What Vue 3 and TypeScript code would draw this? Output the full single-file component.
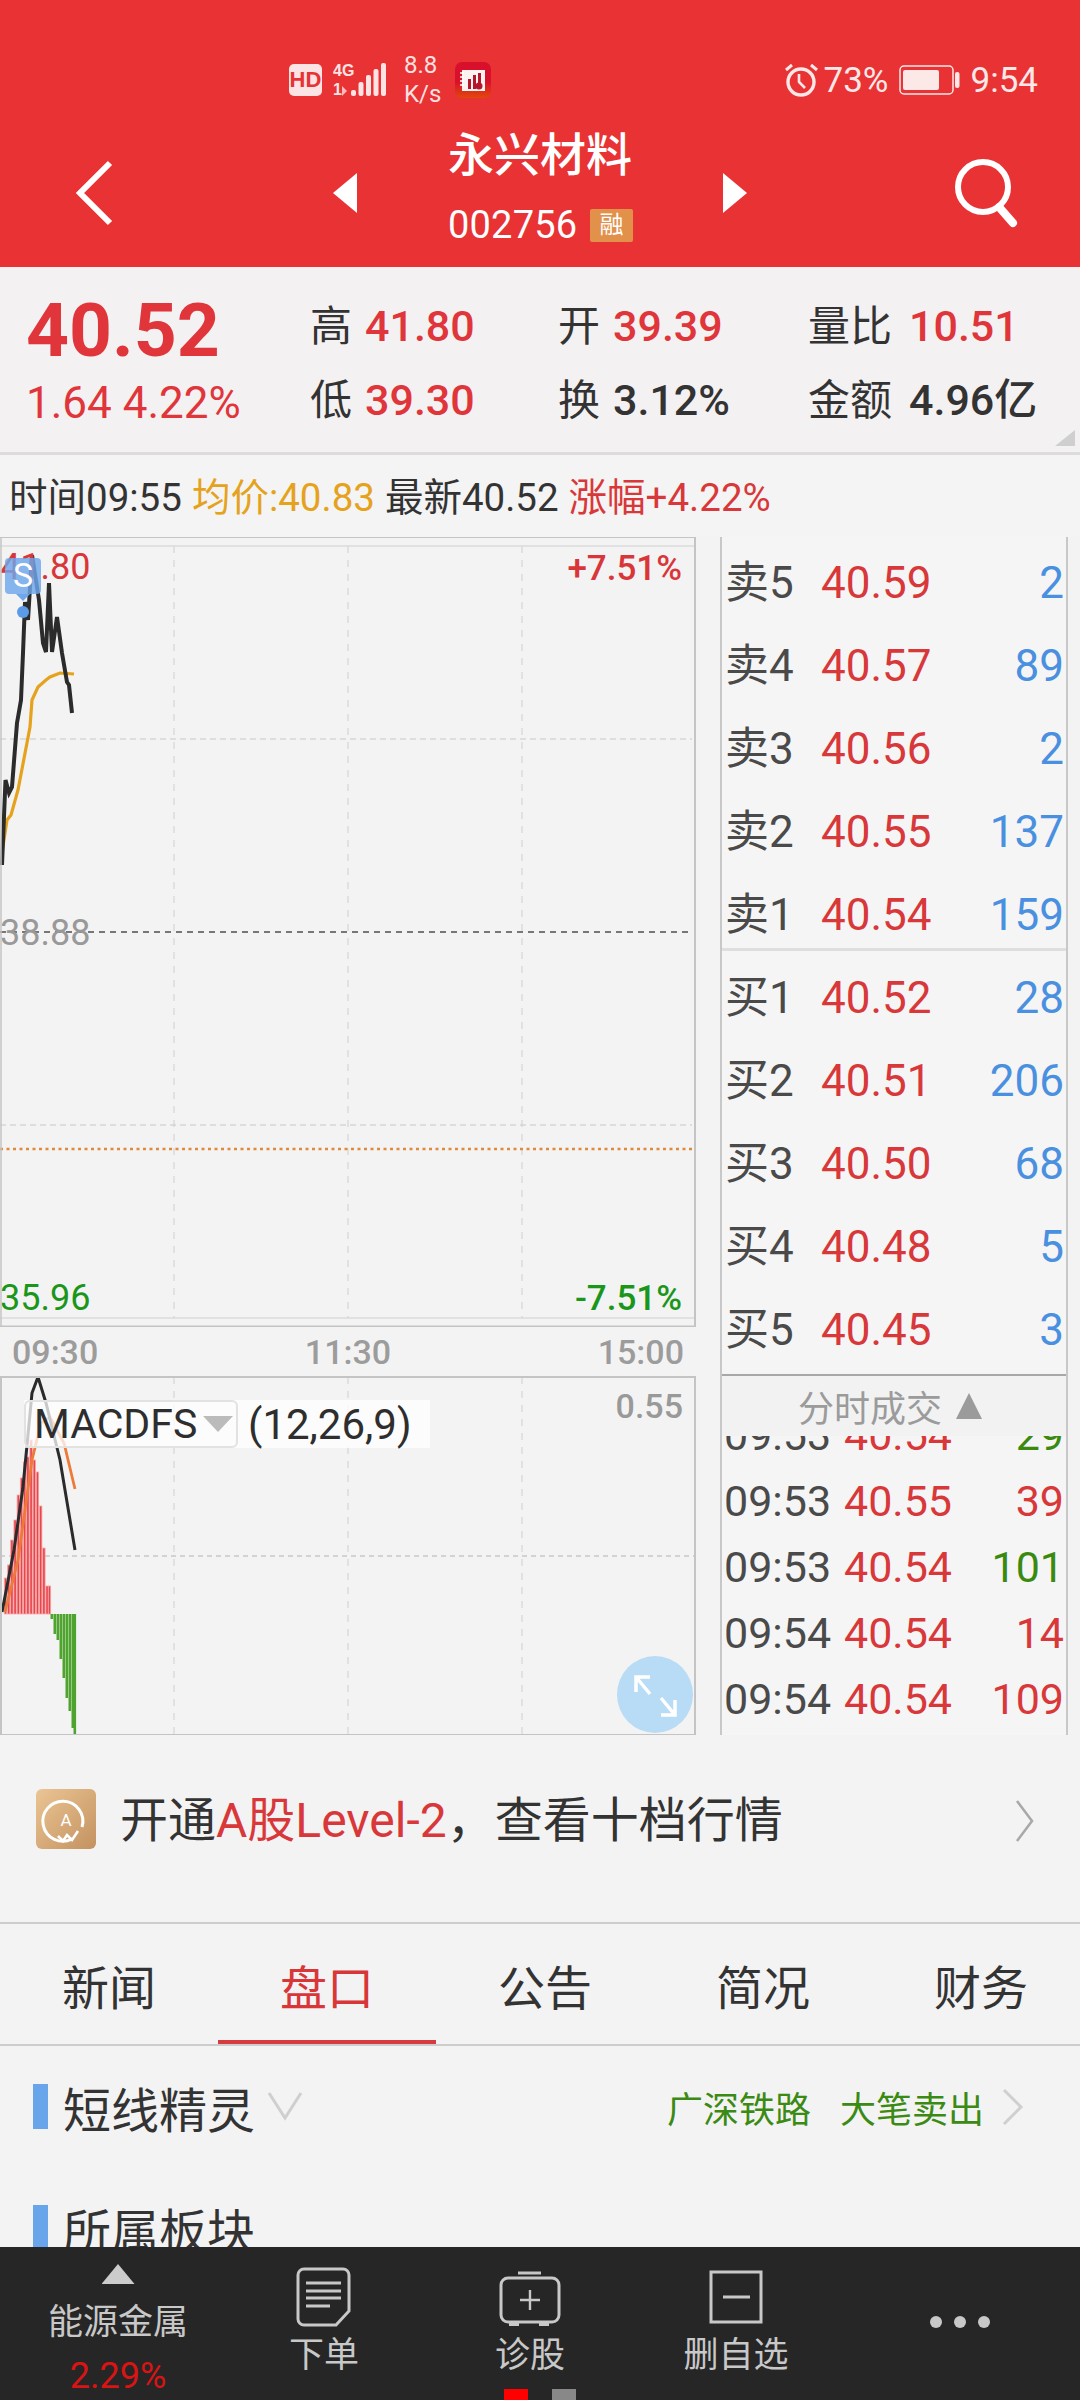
<script setup lang="ts">
const sellRows = [
  { label: "卖5", price: "40.59", vol: "2" },
  { label: "卖4", price: "40.57", vol: "89" },
  { label: "卖3", price: "40.56", vol: "2" },
  { label: "卖2", price: "40.55", vol: "137" },
  { label: "卖1", price: "40.54", vol: "159" },
];
const buyRows = [
  { label: "买1", price: "40.52", vol: "28" },
  { label: "买2", price: "40.51", vol: "206" },
  { label: "买3", price: "40.50", vol: "68" },
  { label: "买4", price: "40.48", vol: "5" },
  { label: "买5", price: "40.45", vol: "3" },
];
const trades = [
  { time: "09:53", price: "40.54", vol: "29", up: false },
  { time: "09:53", price: "40.55", vol: "39", up: true },
  { time: "09:53", price: "40.54", vol: "101", up: false },
  { time: "09:54", price: "40.54", vol: "14", up: true },
  { time: "09:54", price: "40.54", vol: "109", up: true },
];
const tabs = ["新闻", "盘口", "公告", "简况", "财务"];

const priceLine =
  "2,865 5.5,780 9,793 12,787 17,723 21,700 23,653 25,602 28,620 32,555 39,600 43,643 46,652 49,583 52,652 57,617 62,653 67,682 69,685 72,713";
const avgLine =
  "2,853 7,820 11,815 18,790 30,727 32,700 38,687 46,680 50,677 60,673 74,674";
const difLine =
  "2,1612 14,1550 23,1487 32,1393 38,1377 46,1403 60,1460 75,1550";
const deaLine =
  "5,1612 18,1560 32,1460 41,1423 50,1417 64,1443 75,1489";

const redBars = [
  [5.5, 1578], [8.7, 1565], [11.9, 1540], [15.1, 1520], [18.3, 1495], [21.5, 1478], [24.7, 1462],
  [27.9, 1457], [31.1, 1440], [34.3, 1460], [37.5, 1472], [40.7, 1506], [43.9, 1548], [47.1, 1586], [49.5, 1586],
];
const greenBars = [
  [52, 1619], [55, 1634], [58, 1640], [61, 1659], [64, 1678],
  [67, 1698], [70, 1711], [73, 1728], [75, 1735],
];
</script>

<template>
  <div class="page">
    <header class="header">
      <div class="status">
        <svg class="hd" width="33" height="32" viewBox="0 0 33 32">
          <rect width="33" height="32" rx="5" fill="#fde4e4" />
          <text x="16.5" y="23" text-anchor="middle" class="hd-text">HD</text>
        </svg>
        <svg class="signal" width="60" height="40" viewBox="0 0 60 40">
          <text x="0" y="16" class="net-text">4G</text>
          <text x="0" y="35" class="net-text">1</text>
          <path d="M9 26 L14 31 L9 36 Z" fill="#fbb" />
          <rect x="18" y="30" width="5" height="6" rx="2" fill="#fde4e4" />
          <rect x="25.5" y="22" width="5" height="14" rx="2" fill="#fde4e4" />
          <rect x="33" y="15" width="5" height="21" rx="2" fill="#fde4e4" />
          <rect x="40.5" y="9" width="5" height="27" rx="2" fill="#fde4e4" />
          <rect x="48" y="3" width="5" height="33" rx="2" fill="#fde4e4" />
        </svg>
        <div class="speed"><span>8.8</span><span>K/s</span></div>
        <svg class="app" width="36" height="36" viewBox="0 0 36 36">
          <defs>
            <linearGradient id="appBg" x1="0" y1="0" x2="0" y2="1">
              <stop offset="0" stop-color="#d8102c" />
              <stop offset="0.55" stop-color="#d8102c" />
              <stop offset="1" stop-color="#e0480c" />
            </linearGradient>
          </defs>
          <rect width="36" height="36" rx="7" fill="url(#appBg)" />
          <rect x="7" y="8" width="23" height="21" fill="#fdf2f2" />
          <rect x="13" y="17" width="3" height="10" fill="#b5172a" />
          <rect x="18" y="13" width="3" height="14" fill="#b5172a" />
          <rect x="23" y="11" width="3" height="10" fill="#b5172a" />
          <circle cx="24" cy="24" r="3.5" fill="#b5172a" />
          <path d="M5 11h4M5 15h4M5 19h4M5 23h4" stroke="#fff" stroke-width="1.5" />
        </svg>
        <div class="status-right">
          <svg width="36" height="36" viewBox="0 0 36 36" fill="none" stroke="#fde8e8">
            <circle cx="17" cy="20" r="13" stroke-width="3.4" />
            <path d="M15 12 V20 L21 26" stroke-width="2.6" />
            <path d="M2 8 L8 3 M27 3 L33 8" stroke-width="3" />
          </svg>
          <span class="status-pct">73%</span>
          <svg width="62" height="30" viewBox="0 0 62 30">
            <rect x="1" y="1" width="53" height="28" rx="4" fill="none" stroke="#fde8e8" stroke-width="1.5" />
            <rect x="4" y="5" width="36" height="20" rx="2" fill="#fde8e8" />
            <rect x="56" y="7" width="4.5" height="16" rx="2" fill="#fde8e8" />
          </svg>
          <span class="status-time">9:54</span>
        </div>
      </div>

      <div class="nav">
        <svg class="back" width="42" height="68" viewBox="0 0 42 68" fill="none">
          <path d="M36 4 L6 34 L36 64" stroke="#fff" stroke-width="6" />
        </svg>
        <svg width="24" height="40" viewBox="0 0 24 40"><path d="M24 0 V40 L0 20 Z" fill="#fff" /></svg>
        <div class="title-block">
          <div class="title">永兴材料</div>
          <div class="code-row">
            <span class="code">002756</span>
            <span class="rong">融</span>
          </div>
        </div>
        <svg width="24" height="40" viewBox="0 0 24 40"><path d="M0 0 V40 L24 20 Z" fill="#fff" /></svg>
        <svg width="70" height="70" viewBox="0 0 70 70" fill="none" stroke="#fff">
          <circle cx="30" cy="29" r="25" stroke-width="6" />
          <path d="M46 49 L60 65" stroke-width="8" stroke-linecap="round" />
        </svg>
      </div>
    </header>

    <section class="quote">
      <div class="quote-price">
        <div class="big">40.52</div>
        <div class="change">1.64 4.22%</div>
      </div>
      <div class="quote-grid">
        <div class="cell"><span class="k">高</span><span class="v red">41.80</span></div>
        <div class="cell"><span class="k">开</span><span class="v red">39.39</span></div>
        <div class="cell"><span class="k">量比</span><span class="v red">10.51</span></div>
        <div class="cell"><span class="k">低</span><span class="v red">39.30</span></div>
        <div class="cell"><span class="k">换</span><span class="v">3.12%</span></div>
        <div class="cell"><span class="k">金额</span><span class="v">4.96亿</span></div>
      </div>
      <i class="corner"></i>
    </section>

    <div class="info">
      <span>时间09:55</span>
      <span class="avg">均价:40.83</span>
      <span>最新40.52</span>
      <span class="rise">涨幅+4.22%</span>
    </div>

    <div class="market">
      <div class="charts">
        <svg class="chart-main" width="696" height="790" viewBox="0 537 696 790">
          <path d="M0 546 H695 M0 1318 H695" stroke="#dcdcdc" stroke-width="1.5" />
          <path d="M174 546 V1318 M348 546 V1318 M522 546 V1318" stroke="#cfcfcf" stroke-width="1" stroke-dasharray="7 7" />
          <path d="M0 739 H692 M0 1125 H692" stroke="#c8c8c8" stroke-width="1" stroke-dasharray="6 4" />
          <path d="M0 932 H692" stroke="#777" stroke-width="2" stroke-dasharray="6 5" />
          <path d="M0 1149 H692" stroke="#e08a3c" stroke-width="2.5" stroke-dasharray="3 3.5" />
          <polyline :points="avgLine" fill="none" stroke="#e5a21d" stroke-width="3.2" />
          <polyline :points="priceLine" fill="none" stroke="#2b2b2b" stroke-width="4" />
          <text x="0" y="579" class="axis-num fill-red">41.80</text>
          <rect x="5" y="558" width="36" height="36" rx="4" fill="#6ea7ec" opacity="0.82" />
          <path d="M16 594 L23 601 L30 594 Z" fill="#6ea7ec" />
          <text x="23" y="587" text-anchor="middle" class="s-mark">S</text>
          <circle cx="23" cy="612" r="6" fill="#5b9be6" />
          <text x="682" y="580" text-anchor="end" class="axis-side fill-red">+7.51%</text>
          <text x="0" y="945" class="axis-num fill-gray">38.88</text>
          <text x="0" y="1310" class="axis-num fill-green">35.96</text>
          <text x="682" y="1310" text-anchor="end" class="axis-side fill-green">-7.51%</text>
          <path d="M0 537 H695 V1326.5 H0" fill="none" stroke="#c4c4c4" stroke-width="2" />
          <path d="M1 537 V1327" stroke="#c4c4c4" stroke-width="1.5" />
        </svg>

        <div class="axis">
          <span>09:30</span>
          <span>11:30</span>
          <span>15:00</span>
        </div>

        <div class="macd">
          <svg width="696" height="359" viewBox="0 1376 696 359">
            <path d="M174 1377 V1735 M348 1377 V1735 M522 1377 V1735" stroke="#cfcfcf" stroke-width="1" stroke-dasharray="7 7" />
            <path d="M0 1556 H695" stroke="#c8c8c8" stroke-width="1.5" stroke-dasharray="5 4" />
            <rect
              v-for="b in redBars"
              :key="'r' + b[0]"
              :x="b[0] - 1.2"
              :y="b[1]"
              width="2.4"
              :height="1614 - b[1]"
              fill="#e8454c"
              stroke="#f7a8a8"
              stroke-width="0.8"
            />
            <rect
              v-for="b in greenBars"
              :key="'g' + b[0]"
              :x="b[0] - 1.5"
              y="1614"
              width="2.6"
              :height="b[1] - 1614"
              fill="#4fa32f"
            />
            <polyline :points="deaLine" fill="none" stroke="#ee7a3a" stroke-width="2.8" />
            <polyline :points="difLine" fill="none" stroke="#2b2b2b" stroke-width="3" />
            <text x="683" y="1418" text-anchor="end" class="axis-small fill-gray">0.55</text>
            <path d="M0 1377 H695 V1735 H0 M1 1377 V1735" fill="none" stroke="#c4c4c4" stroke-width="2" />
          </svg>
          <div class="macd-label">
            <div class="macd-select">
              <span>MACDFS</span>
              <i class="macd-caret"></i>
            </div>
            <span class="macd-args">(12,26,9)</span>
          </div>
          <button class="expand">
            <svg width="76" height="77" viewBox="0 0 76 77" fill="none" stroke="#fff" stroke-width="3.5">
              <path d="M19 36 V21 H33 M19 21 L33 38" />
              <path d="M58 44 V59 H44 M58 59 L44 42" />
            </svg>
          </button>
        </div>
      </div>

      <aside class="side">
        <div class="book sell">
          <div v-for="r in sellRows" :key="r.label" class="book-row">
            <span class="book-label">{{ r.label }}</span>
            <span class="book-price">{{ r.price }}</span>
            <span class="book-vol">{{ r.vol }}</span>
          </div>
        </div>
        <div class="book buy">
          <div v-for="r in buyRows" :key="r.label" class="book-row">
            <span class="book-label">{{ r.label }}</span>
            <span class="book-price">{{ r.price }}</span>
            <span class="book-vol">{{ r.vol }}</span>
          </div>
        </div>
        <div class="trade-head">分时成交<i class="trade-caret"></i></div>
        <div class="trades">
          <div class="trades-inner">
            <div v-for="(t, i) in trades" :key="i" class="trade-row">
              <span class="trade-time">{{ t.time }}</span>
              <span class="trade-price">{{ t.price }}</span>
              <span class="trade-vol" :class="{ 'trade-up': t.up }">{{ t.vol }}</span>
            </div>
          </div>
        </div>
      </aside>
    </div>

    <div class="banner">
      <svg class="banner-icon" width="60" height="60" viewBox="0 0 60 60">
        <defs>
          <linearGradient id="goldBg" x1="0" y1="0" x2="1" y2="1">
            <stop offset="0" stop-color="#ebc594" />
            <stop offset="1" stop-color="#c39260" />
          </linearGradient>
        </defs>
        <rect width="60" height="60" rx="6" fill="url(#goldBg)" />
        <path d="M36 50 A20 20 0 1 1 46 38" fill="none" stroke="#fff" stroke-width="3" />
        <path d="M22 47 L27 52 L31 46 L36 51 L42 42" fill="none" stroke="#fff" stroke-width="2.6" />
        <text x="30" y="37" text-anchor="middle" class="banner-a">A</text>
      </svg>
      <div class="banner-text">开通<em>A股Level-2</em>，查看十档行情</div>
      <svg class="banner-arrow" width="20" height="44" viewBox="0 0 20 44" fill="none">
        <path d="M2 2 L17 22 L2 42" stroke="#a8a8a8" stroke-width="2.5" />
      </svg>
    </div>

    <nav class="tabs">
      <div v-for="t in tabs" :key="t" class="tab" :class="{ active: t === '盘口' }">{{ t }}</div>
    </nav>

    <div class="content">
      <div class="sec">
        <i class="sec-bar"></i>
        <span class="sec-title">短线精灵</span>
        <svg class="sec-down" width="36" height="30" viewBox="0 0 36 30" fill="none">
          <path d="M2 2 L18 27 L34 2" stroke="#cfcfcf" stroke-width="3" />
        </svg>
        <span class="sec-green first">广深铁路</span>
        <span class="sec-green">大笔卖出</span>
        <svg class="sec-arrow" width="22" height="38" viewBox="0 0 22 38" fill="none">
          <path d="M2 2 L19 19 L2 36" stroke="#cfcfcf" stroke-width="3" />
        </svg>
      </div>
      <div class="sec">
        <i class="sec-bar"></i>
        <span class="sec-title">所属板块</span>
      </div>
    </div>

    <footer class="footer">
      <div class="foot-item foot-sector">
        <i class="foot-tri"></i>
        <span class="foot-name">能源金属</span>
        <span class="foot-pct">2.29%</span>
      </div>
      <div class="foot-item">
        <svg width="70" height="62" viewBox="0 0 70 62" fill="none" stroke="#c8c8c8" stroke-width="3">
          <path d="M15 2 H54 a6 6 0 0 1 6 6 V44 L47 58 H15 a6 6 0 0 1 -6 -6 V8 a6 6 0 0 1 6 -6 Z" />
          <path d="M17 16 H52 M17 24 H52 M17 31 H52 M17 39 H41" />
        </svg>
        <span class="foot-label">下单</span>
      </div>
      <div class="foot-item">
        <svg width="70" height="62" viewBox="0 0 70 62" fill="none" stroke="#c8c8c8" stroke-width="3">
          <rect x="6" y="11" width="58" height="44" rx="7" />
          <path d="M23 6 H46" />
          <path d="M25 33 H45 M35 23 V43" stroke-width="2.4" />
          <path d="M14 57 H24 M44 57 H54" stroke-width="4" />
        </svg>
        <span class="foot-label">诊股</span>
      </div>
      <div class="foot-item">
        <svg width="70" height="62" viewBox="0 0 70 62" fill="none" stroke="#c8c8c8" stroke-width="3">
          <rect x="10" y="5" width="50" height="50" />
          <path d="M22 30 H49" />
        </svg>
        <span class="foot-label">删自选</span>
      </div>
      <div class="foot-more"><i></i><i></i><i></i></div>
      <div class="pager"><i class="on"></i><i></i></div>
    </footer>
  </div>
</template>

<style scoped>
.page {
  width: 1080px;
  height: 2400px;
  display: flex;
  flex-direction: column;
  overflow: hidden;
  position: relative;
  background: #f4f3f3;
  color: #333;
  font-family: Roboto, "Noto Sans CJK SC", sans-serif;
}

.header {
  height: 267px;
  flex: none;
  background: #e83234;
  color: #fff;
}
.status {
  height: 118px;
  padding: 42px 42px 0 289px;
  box-sizing: border-box;
  display: flex;
  align-items: center;
}
.hd-text {
  font: 700 22px "Liberation Sans", sans-serif;
  fill: #e83234;
}
.net-text {
  font: 700 16px "Liberation Sans", sans-serif;
  fill: #fde4e4;
}
.signal {
  margin-left: 11px;
}
.speed {
  width: 41px;
  margin-left: 11px;
  display: flex;
  flex-direction: column;
  font-size: 24px;
  line-height: 29px;
  color: #fde0e0;
}
.app {
  margin-left: 10px;
}
.status-right {
  margin-left: auto;
  display: flex;
  align-items: center;
  color: #fde8e8;
  font-size: 35px;
}
.status-pct {
  margin-left: 4px;
}
.status-right svg + span + svg {
  margin-left: 10px;
}
.status-time {
  margin-left: 10px;
}

.nav {
  height: 149px;
  display: grid;
  grid-template-columns: 333px 115px 275px 230px 127px;
  align-items: center;
}
.back {
  margin-left: 74px;
}
.title-block {
  align-self: start;
  padding-top: 2px;
}
.title {
  font-size: 46px;
  line-height: 70px;
  font-weight: 500;
}
.code-row {
  display: flex;
  align-items: center;
  height: 70px;
}
.code {
  font-size: 38px;
  letter-spacing: 0.2px;
  width: 142px;
}
.rong {
  width: 43px;
  height: 33px;
  line-height: 33px;
  text-align: center;
  background: #e2914b;
  font-size: 24px;
  border-radius: 2px;
}

.quote {
  position: relative;
  height: 188px;
  flex: none;
  box-sizing: border-box;
  border-bottom: 3px solid #dcdcdc;
  display: flex;
  background: #f3f1f1;
}
.quote-price {
  width: 310px;
  padding: 21px 0 0 26px;
  box-sizing: border-box;
  color: #e0353a;
}
.big {
  font-size: 75px;
  line-height: 84px;
  font-weight: 700;
}
.change {
  font-size: 44px;
  line-height: 62px;
  font-weight: 400;
}
.quote-grid {
  padding-top: 22px;
  display: grid;
  grid-template-columns: 248px 250px 260px;
  grid-auto-rows: 74px;
  align-items: center;
}
.cell {
  display: flex;
  align-items: baseline;
  line-height: 74px;
}
.cell:nth-child(3n) .k {
  margin-right: 17px;
}
.k {
  font-size: 42px;
  margin-right: 13px;
}
.v {
  font-size: 43px;
  font-weight: 500;
}
.red {
  color: #e0353a;
}
.corner {
  position: absolute;
  right: 5px;
  bottom: 6px;
  width: 20px;
  height: 16px;
  background: #cfcfcf;
  clip-path: polygon(100% 0, 100% 100%, 0 100%);
}

.info {
  height: 82px;
  flex: none;
  box-sizing: border-box;
  padding: 0 0 4px 9px;
  display: flex;
  align-items: center;
  gap: 10px;
  font-size: 38.5px;
  background: #f4f4f4;
}
.avg {
  color: #e5a21d;
}
.rise {
  color: #d9383a;
}

.market {
  flex: none;
  height: 1198px;
  display: flex;
}
.charts {
  width: 696px;
  flex: none;
  margin-right: 24px;
}
.chart-main,
.macd svg {
  display: block;
}
.axis-num {
  font-size: 36px;
}
.axis-side {
  font-size: 35px;
  font-weight: 500;
}
.axis-small {
  font-size: 34px;
  font-weight: 500;
}
.fill-red {
  fill: #d9363a;
}
.fill-green {
  fill: #1a961a;
}
.fill-gray {
  fill: #999;
}
.s-mark {
  font-size: 34px;
  fill: #fff;
}

.axis {
  height: 49px;
  padding: 0 12px;
  display: flex;
  align-items: center;
  justify-content: space-between;
  font-size: 34px;
  font-weight: 500;
  color: #9c9c9c;
}

.macd {
  position: relative;
  height: 359px;
}
.macd-label {
  position: absolute;
  left: 24px;
  top: 24px;
  height: 48px;
  display: flex;
  align-items: center;
  background: rgba(255, 255, 255, 0.75);
  color: #2e2e2e;
}
.macd-select {
  width: 214px;
  height: 48px;
  box-sizing: border-box;
  padding-left: 8px;
  border: 2px solid #e2e2e2;
  border-radius: 6px;
  display: flex;
  align-items: center;
  font-size: 41px;
}
.macd-caret {
  margin-left: 6px;
  width: 0;
  height: 0;
  border-left: 15px solid transparent;
  border-right: 15px solid transparent;
  border-top: 16px solid #bbb;
}
.macd-args {
  font-size: 42px;
  padding: 0 18px 0 10px;
}
.expand {
  position: absolute;
  left: 617px;
  top: 280px;
  width: 76px;
  height: 77px;
  padding: 0;
  border: 0;
  border-radius: 50%;
  background: #b8dcf5;
}

.side {
  width: 348px;
  height: 1198px;
  flex: none;
  box-sizing: border-box;
  border-left: 2px solid #c8c8c8;
  border-right: 2px solid #c8c8c8;
  background: #f6f5f5;
  display: flex;
  flex-direction: column;
}
.book {
  box-sizing: border-box;
  flex: none;
}
.sell {
  height: 414px;
  padding-top: 5px;
  border-bottom: 3px solid #dedede;
}
.buy {
  height: 425px;
  padding-top: 6px;
  border-bottom: 2px solid #a8a8a8;
}
.book-row {
  height: 83px;
  line-height: 83px;
  padding: 0 2px 0 3px;
  display: flex;
  align-items: baseline;
  font-size: 44px;
}
.book-label {
  width: 96px;
  color: #4a4a4a;
}
.book-price {
  color: #d8383a;
}
.book-vol {
  margin-left: auto;
  color: #4a90e0;
}
.trade-head {
  height: 60px;
  flex: none;
  background: #f2f2f2;
  color: #9b9b9b;
  font-size: 36px;
  display: flex;
  align-items: center;
  justify-content: center;
  padding-right: 8px;
}
.trade-caret {
  margin-left: 14px;
  width: 0;
  height: 0;
  border-left: 13px solid transparent;
  border-right: 13px solid transparent;
  border-bottom: 26px solid #9b9b9b;
}
.trades {
  flex: 1;
  overflow: hidden;
}
.trades-inner {
  margin-top: -34px;
}
.trade-row {
  height: 66px;
  padding: 0 2px;
  display: flex;
  align-items: center;
  font-size: 43px;
}
.trade-time {
  width: 120px;
  color: #4a4a4a;
}
.trade-price {
  color: #d8383a;
}
.trade-vol {
  margin-left: auto;
  color: #3a8a10;
}
.trade-up {
  color: #d8383a;
}

.banner {
  height: 189px;
  flex: none;
  box-sizing: border-box;
  padding: 54px 45px 0 36px;
  border-bottom: 2px solid #cdcdcd;
  display: flex;
  align-items: flex-start;
}
.banner-icon {
  flex: none;
}
.banner-a {
  font-size: 17px;
  fill: #fff;
}
.banner-text {
  margin-left: 24px;
  font-size: 48px;
  line-height: 64px;
  color: #333;
}
.banner-text em {
  font-style: normal;
  color: #d9383a;
}
.banner-arrow {
  margin-left: auto;
  margin-top: 10px;
}

.tabs {
  height: 122px;
  flex: none;
  box-sizing: border-box;
  border-bottom: 2px solid #cdcdcd;
  display: flex;
}
.tab {
  width: 218px;
  flex: none;
  height: 120px;
  display: flex;
  align-items: center;
  justify-content: center;
  font-size: 47px;
}
.tab.active {
  color: #d9363a;
  box-shadow: inset 0 -4px 0 #d63b3f;
}

.content {
  flex: 1;
  overflow: hidden;
}
.sec {
  height: 121px;
  padding-right: 56px;
  display: flex;
  align-items: center;
}
.sec-bar {
  margin-left: 33px;
  width: 15px;
  height: 45px;
  background: #69a5ea;
  flex: none;
}
.sec-title {
  margin-left: 15px;
  font-size: 48px;
  color: #333;
}
.sec-down {
  margin-left: 12px;
  margin-top: -2px;
}
.sec-green {
  font-size: 36px;
  color: #3b8a14;
  margin-left: 29px;
}
.sec-green.first {
  margin-left: auto;
}
.sec-arrow {
  margin-left: 18px;
}

.footer {
  position: relative;
  height: 153px;
  flex: none;
  box-sizing: border-box;
  padding: 20px 0 0 15px;
  background: #262626;
  display: grid;
  grid-template-columns: 206px 206px 206px 206px 1fr;
  color: #c8c8c8;
}
.foot-item {
  display: flex;
  flex-direction: column;
  align-items: center;
}
.foot-label {
  margin-top: 7px;
  line-height: 40px;
  font-size: 35px;
}
.foot-sector {
  margin-top: -3px;
}
.foot-tri {
  width: 33px;
  height: 20px;
  background: #ccc;
  clip-path: polygon(50% 0, 100% 100%, 0 100%);
}
.foot-name {
  margin-top: 19px;
  line-height: 40px;
  font-size: 35px;
}
.foot-pct {
  margin-top: 13px;
  line-height: 40px;
  font-size: 36px;
  color: #d81414;
}
.foot-more {
  height: 110px;
  display: flex;
  gap: 12px;
  align-items: center;
  justify-content: center;
}
.foot-more i {
  width: 12px;
  height: 12px;
  border-radius: 50%;
  background: #c8c8c8;
}
.pager {
  position: absolute;
  left: 504px;
  bottom: 0;
  display: flex;
  gap: 24px;
}
.pager i {
  width: 24px;
  height: 11px;
  background: #888;
}
.pager i.on {
  background: #f00;
}
</style>

<style>
html,
body {
  margin: 0;
  background: #f4f3f3;
}
</style>
